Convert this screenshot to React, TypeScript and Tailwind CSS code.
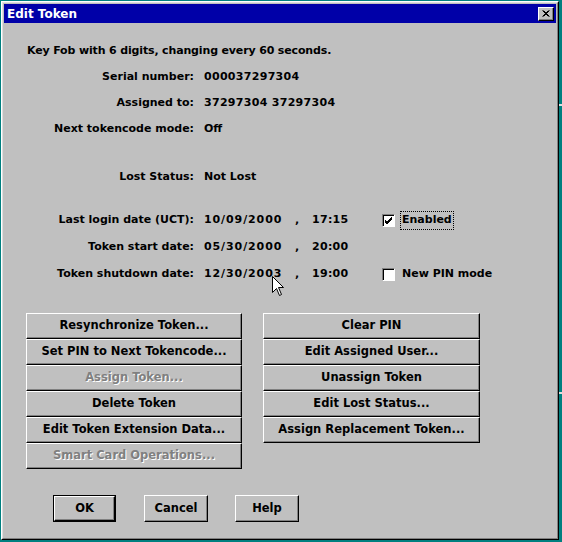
import React from 'react';

const font = { fontFamily: '"DejaVu Sans", "Liberation Sans", sans-serif' };

const leftButtons = [
  { label: 'Resynchronize Token...', disabled: false },
  { label: 'Set PIN to Next Tokencode...', disabled: false },
  { label: 'Assign Token...', disabled: true },
  { label: 'Delete Token', disabled: false },
  { label: 'Edit Token Extension Data...', disabled: false },
  { label: 'Smart Card Operations...', disabled: true },
];

const rightButtons = [
  'Clear PIN',
  'Edit Assigned User...',
  'Unassign Token',
  'Edit Lost Status...',
  'Assign Replacement Token...',
];

const Btn: React.FC<{ label: string; disabled?: boolean; className?: string }> = ({ label, disabled, className }) => (
  <div
    className={`h-[26px] flex items-center justify-center text-[11.5px] bg-[#c0c0c0] border-t border-l border-t-white border-l-white border-r border-b border-r-black border-b-black shadow-[inset_-1px_-1px_0_#808080] ${
      disabled ? 'text-[#808080] [text-shadow:1px_1px_0_#ffffff]' : 'text-black'
    } ${className ?? ''}`}
  >
    {label}
  </div>
);

const Row: React.FC<{ label: string; h: string; children?: React.ReactNode }> = ({ label, h, children }) => (
  <div className={`flex items-center ${h}`}>
    <div className="w-[169px] text-right pr-[1px]">{label}</div>
    <div className="ml-[9px] flex items-center">{children}</div>
  </div>
);

const Checkbox: React.FC<{ checked: boolean; label: string; focused?: boolean }> = ({ checked, label, focused }) => (
  <div className="flex items-center">
    <div className="w-[13px] h-[13px] bg-white border-t border-l border-t-[#808080] border-l-[#808080] border-r border-b border-r-white border-b-white shadow-[inset_1px_1px_0_#000000] flex items-center justify-center">
      {checked && (
        <svg width="9" height="9" viewBox="0 0 9 9">
          <path d="M1 4 L3 6 L8 1 M1 5 L3 7 L8 2 M1 6 L3 8 L8 3" stroke="#000" strokeWidth="1" fill="none" />
        </svg>
      )}
    </div>
    <div className={`ml-[5px] px-[1px] ${focused ? 'border border-dotted border-black' : 'border border-transparent'}`}>
      {label}
    </div>
  </div>
);

export default function App() {
  return (
    <div className="w-[562px] h-[542px] bg-[#008080] pt-[1px] pl-[1px] relative overflow-hidden" style={font}>
      {/* bits of the window behind */}
      <div className="absolute right-0 top-[104px] w-[3px] h-[2px] bg-[#dfdfdf]" />
      <div className="absolute right-0 top-[392px] w-[3px] h-[2px] bg-[#dfdfdf]" />

      <div className="w-[558px] h-[539px] bg-[#c0c0c0] border-t border-l border-t-white border-l-white border-r border-b border-r-black border-b-black">
        <div className="h-full border-t border-l border-t-[#dfdfdf] border-l-[#dfdfdf] border-r border-b border-r-[#808080] border-b-[#808080] p-[1px] flex flex-col text-[11px] font-bold text-black">
          {/* Title bar */}
          <div className="h-[19px] bg-[#0000a8] flex items-center justify-between pl-[3px] pr-[2px]">
            <span className="text-white text-[12px] font-bold">Edit Token</span>
            <div className="w-[16px] h-[14px] bg-[#c0c0c0] border-t border-l border-t-white border-l-white border-r border-b border-r-black border-b-black shadow-[inset_-1px_-1px_0_#808080] flex items-center justify-center">
              <svg width="8" height="7" viewBox="0 0 8 7">
                <path d="M0.5 0.5 L6.5 6.5 M1.5 0.5 L7.5 6.5 M6.5 0.5 L0.5 6.5 M7.5 0.5 L1.5 6.5" stroke="#000" strokeWidth="1" />
              </svg>
            </div>
          </div>

          {/* Body */}
          <div className="flex flex-col pl-[22px] mt-[15px]">
            <div className="h-[26px] flex items-center pl-[1px] tracking-[-0.15px]">Key Fob with 6 digits, changing every 60 seconds.</div>
            <Row label="Serial number:" h="h-[26px]">
              <span className="tracking-[0.3px]">000037297304</span>
            </Row>
            <Row label="Assigned to:" h="h-[26px]">
              <span className="tracking-[0.3px]">37297304 37297304</span>
            </Row>
            <Row label="Next tokencode mode:" h="h-[26px]">Off</Row>
            <div className="mt-[22px]">
              <Row label="Lost Status:" h="h-[26px]">Not Lost</Row>
            </div>
            <div className="mt-[17px]">
              <Row label="Last login date (UCT):" h="h-[27px]">
                <span className="w-[91px] tracking-[0.9px]">10/09/2000</span>
                <span className="w-[17px]">,</span>
                <span className="w-[70px] tracking-[0.3px]">17:15</span>
                <Checkbox checked label="Enabled" focused />
              </Row>
              <Row label="Token start date:" h="h-[27px]">
                <span className="w-[91px] tracking-[0.9px]">05/30/2000</span>
                <span className="w-[17px]">,</span>
                <span className="w-[70px] tracking-[0.3px]">20:00</span>
              </Row>
              <Row label="Token shutdown date:" h="h-[27px]">
                <span className="w-[91px] tracking-[0.9px]">12/30/2003</span>
                <span className="w-[17px]">,</span>
                <span className="w-[70px] tracking-[0.3px]">19:00</span>
                <Checkbox checked={false} label="New PIN mode" />
              </Row>
            </div>

            {/* Action buttons */}
            <div className="flex mt-[25px]">
              <div className="w-[216px] flex flex-col">
                {leftButtons.map((b) => (
                  <Btn key={b.label} label={b.label} disabled={b.disabled} />
                ))}
              </div>
              <div className="w-[217px] ml-[21px] flex flex-col">
                {rightButtons.map((b) => (
                  <Btn key={b} label={b} />
                ))}
              </div>
            </div>

            {/* OK / Cancel / Help */}
            <div className="flex mt-[26px] ml-[27px]">
              <div className="w-[63px] h-[27px] border border-black">
                <Btn label="OK" className="h-full" />
              </div>
              <Btn label="Cancel" className="w-[64px] h-[27px] ml-[28px]" />
              <Btn label="Help" className="w-[64px] h-[27px] ml-[27px]" />
            </div>
          </div>
        </div>
      </div>

      {/* mouse pointer */}
      <svg className="absolute left-[272px] top-[276px]" width="13" height="21" viewBox="0 0 13 21">
        <path
          d="M0.5 0.5 L0.5 16.5 L4.5 12.5 L7.5 19.5 L9.5 18.5 L6.5 11.5 L11.5 11.5 Z"
          fill="#ffffff"
          stroke="#000000"
          strokeWidth="1"
        />
      </svg>
    </div>
  );
}
